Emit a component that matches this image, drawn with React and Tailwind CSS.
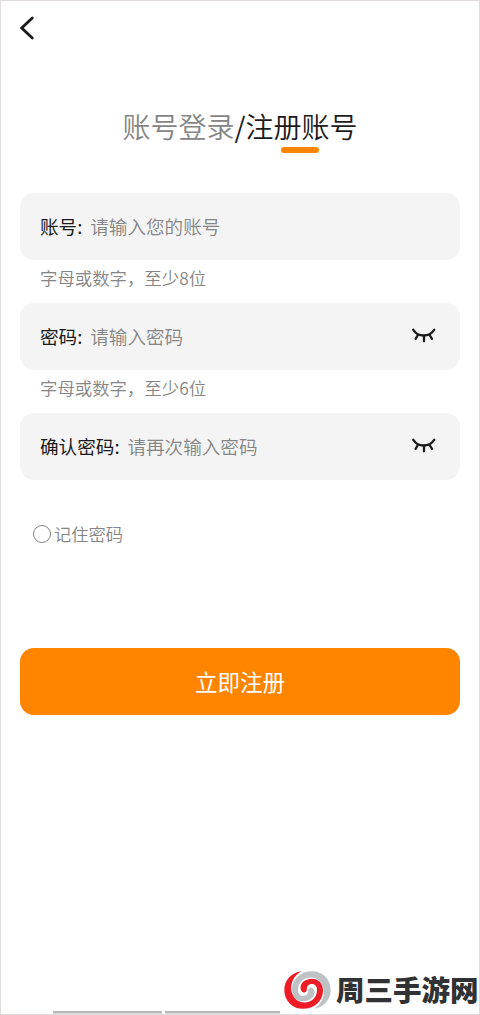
const EyeClosed = () => (
  <svg className="h-4 w-6" viewBox="0 0 24 16" fill="none" stroke="#1b1b1b" strokeWidth="2.3" strokeLinecap="round">
    <path d="M1.300 1.800C6.200 9.400 17 9.400 22.200 1.800" />
    <path d="M5.900 7L3.600 10.800M12 8V13.300M17.600 7L20 10.800" />
  </svg>
);

const Field = ({ label, placeholder, secret }) => (
  <div className="flex h-[66.5px] items-center rounded-[14px] bg-[#f4f4f4] pl-5 pr-6 text-[18.6px] leading-none">
    <span className="whitespace-nowrap text-[#1b1b1b]">{label}</span>
    <span className="w-[13px] text-[#1b1b1b]">:</span>
    <span className="flex-1 whitespace-nowrap font-[350] text-[#858585]">{placeholder}</span>
    {secret && <EyeClosed />}
  </div>
);

const Hint = ({ children }) => (
  <p className="flex h-[43.5px] items-center pb-[6.5px] pl-5 text-[17.4px] font-[350] leading-none text-[#858585]">{children}</p>
);

const SwirlArm = ({ fill, transform }) => (
  <path
    transform={transform}
    fill={fill}
    d="M17.500 1.200C7 2.500 0.300 10.500 0.300 20C0.300 31 8.500 38.800 19 38.800C30 38.800 39 31.500 39 20.500C39 13.500 34.500 8.700 28 8.700C21.500 8.700 16.500 12.500 16.500 17.500C16.500 20.500 18 22.500 20.200 22.500C22 22.500 22.800 21 22.800 19.200C22.800 15.800 25 14 28 14C31.200 14 33 16.500 33 20C33 27.500 27.500 32.500 20.500 32.500C13 32.500 7.200 26.500 7.200 18C7.200 10.500 11.500 4.500 17.500 1.200Z"
  />
);

const Swirl = () => (
  <svg className="h-10 w-12 shrink-0" viewBox="0 0 48 40">
    <SwirlArm fill="#bec2c5" transform="rotate(180 23.5 20)" />
    <SwirlArm fill="#ed1c27" />
  </svg>
);

export default function App() {
  return (
    <div className="relative h-[1015px] w-[480px] overflow-hidden border border-[#dedbda] bg-white font-['Noto_Sans_CJK_SC',sans-serif]">
      <header className="flex h-[54px] items-center pl-[18px]">
        <svg className="h-6 w-[18px]" viewBox="0 0 18 24" fill="none" stroke="#1b1b1b" strokeWidth="2.8" strokeLinecap="round">
          <path d="M13.300 2L2.700 12L13.300 22" />
        </svg>
      </header>
      <nav className="flex h-[138px] flex-col items-center pt-[56px]">
        <div className="flex h-[30px] items-center text-[28px] leading-none">
          <span className="font-[350] text-[#858585]">账号登录</span>
          <span className="w-[11px] text-[#1b1b1b]">/</span>
          <span className="font-[350] text-[#1b1b1b]">注册账号</span>
        </div>
        <div className="ml-[119px] mt-1.5 h-1.5 w-[38px] rounded-full bg-[#ff8400]" />
      </nav>
      <main className="px-[19px]">
        <Field label="账号" placeholder="请输入您的账号" />
        <Hint>字母或数字，至少8位</Hint>
        <Field label="密码" placeholder="请输入密码" secret />
        <Hint>字母或数字，至少6位</Hint>
        <Field label="确认密码" placeholder="请再次输入密码" secret />
        <label className="mt-[44px] flex h-5 items-center gap-[3px] pl-[13px] text-[17.3px] font-[350] leading-none text-[#858585]">
          <span className="size-[18px] rounded-full border-[1.5px] border-[#858585]" />
          <span>记住密码</span>
        </label>
        <button className="mt-[104.5px] flex h-[66.5px] w-full items-center justify-center rounded-[14px] bg-[#ff8400] text-[22.5px] leading-none text-white">立即注册</button>
      </main>
      <div className="absolute bottom-0 left-[52px] flex gap-[3px]">
        <span className="h-[3px] w-[109px] border-b border-[#dedbda] bg-[#b9b8b8]" />
        <span className="h-[3px] w-[116px] border-b border-[#dedbda] bg-[#b9b8b8]" />
      </div>
      <div className="absolute -bottom-px -right-px flex h-[50px] w-[200px] items-center bg-white pl-1">
        <Swirl />
        <span className="mb-0.5 ml-1 whitespace-nowrap text-[28.5px] font-black leading-none text-[#303234]">周三手游网</span>
      </div>
    </div>
  );
}
